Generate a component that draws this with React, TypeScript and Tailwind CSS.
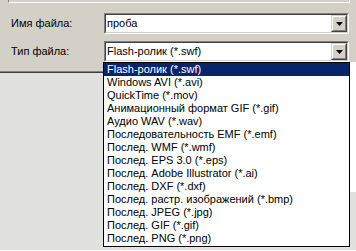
import React from "react";

const items = [
  "Flash-ролик (*.swf)",
  "Windows AVI (*.avi)",
  "QuickTime (*.mov)",
  "Анимационный формат GIF (*.gif)",
  "Аудио WAV (*.wav)",
  "Последовательность EMF (*.emf)",
  "Послед. WMF (*.wmf)",
  "Послед. EPS 3.0 (*.eps)",
  "Послед. Adobe Illustrator (*.ai)",
  "Послед. DXF (*.dxf)",
  "Послед. растр. изображений (*.bmp)",
  "Послед. JPEG (*.jpg)",
  "Послед. GIF (*.gif)",
  "Послед. PNG (*.png)",
];

function Combo({ value }: { value: string }) {
  return (
    <div className="w-[245px] h-[21px] border border-t-[#808080] border-l-[#808080] border-b-white border-r-white">
      <div className="h-full border border-t-[#404040] border-l-[#404040] border-b-[#d4d0c8] border-r-[#d4d0c8] bg-white flex items-center">
        <div className="flex-1 pl-[1px] text-[11px] leading-[13px] text-black whitespace-nowrap">{value}</div>
        <div className="w-[16px] h-[17px] bg-[#d4d0c8] border border-t-[#d4d0c8] border-l-[#d4d0c8] border-b-[#404040] border-r-[#404040]">
          <div className="w-full h-full border border-t-white border-l-white border-b-[#808080] border-r-[#808080] flex items-center justify-center">
            <svg width="7" height="4" viewBox="0 0 7 4">
              <path d="M0 0h7L3.5 4z" fill="#000" />
            </svg>
          </div>
        </div>
      </div>
    </div>
  );
}

export default function App() {
  return (
    <div className="relative w-[356px] h-[251px] overflow-hidden bg-[#d4d0c8] font-['Liberation_Sans',Arial,sans-serif] text-[11px] text-black">
      <div className="flex flex-col h-full">
        <div className="h-[3px] ml-[8px] mr-[6px] border-l border-l-[#808080] border-r border-r-white border-b border-b-white" />
        <div className="flex flex-col gap-[7px] pt-[10px]">
          <div className="flex items-center h-[21px]">
            <div className="w-[104px] pl-[11px]">Имя файла:</div>
            <Combo value="проба" />
          </div>
          <div className="flex items-center h-[21px]">
            <div className="w-[104px] pl-[11px]">Тип файла:</div>
            <Combo value="Flash-ролик (*.swf)" />
          </div>
        </div>
        <div className="mt-[9px] flex-1 border-t border-t-[#808080] bg-[#e1e2e0]">
          <div className="h-full border-t border-t-[#404040] border-b border-b-white" />
        </div>
      </div>
      <div className="absolute right-0 top-[62px] w-[7px] h-[130px] bg-white" />
      <div className="absolute left-[103px] top-[62px] w-[247px] border border-black bg-white pb-[1px]">
        {items.map((t, i) => (
          <div
            key={t}
            className={
              "h-[13px] leading-[13px] pl-[3px] whitespace-nowrap " +
              (i === 0 ? "bg-[#0a246a] text-white" : "text-black")
            }
          >
            {t}
          </div>
        ))}
      </div>
    </div>
  );
}
